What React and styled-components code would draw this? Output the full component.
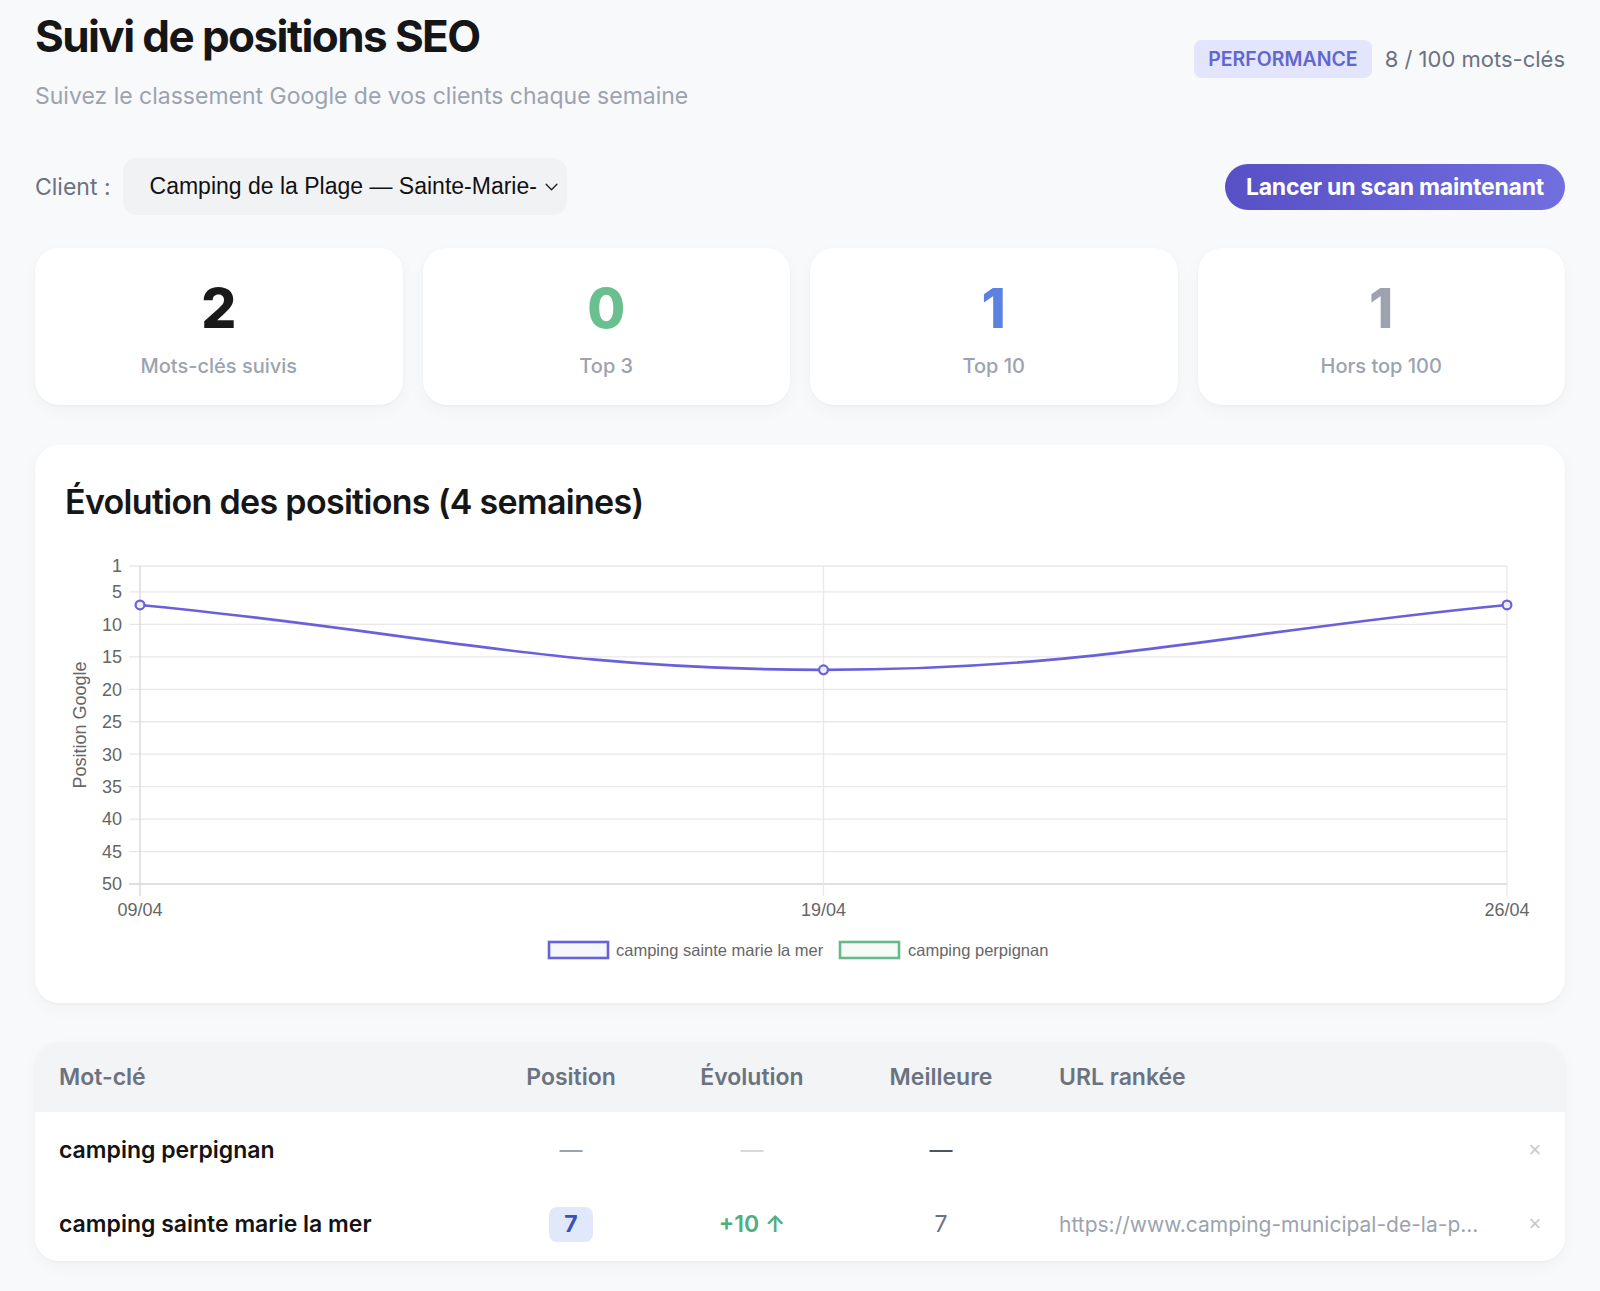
import React from "react";
import styled, { createGlobalStyle } from "styled-components";

const GlobalStyle = createGlobalStyle`
  html, body {
    margin: 0;
    background: #f8f9fb;
  }
  body {
    font-family: Inter, "Noto Sans", sans-serif;
    color: #111827;
  }
  * {
    box-sizing: border-box;
  }
`;

const Page = styled.div`
  padding: 10px 35px 30px;
`;

const Header = styled.header`
  display: flex;
  justify-content: space-between;
  align-items: flex-start;
`;

const Title = styled.h1`
  margin: 0;
  font-size: 44px;
  line-height: 53px;
  font-weight: 700;
  letter-spacing: -0.036em;
  color: #161616;
`;

const Subtitle = styled.p`
  margin: 18px 0 0;
  font-size: 23px;
  line-height: 30px;
  color: #9ca3af;
`;

const Quota = styled.div`
  display: flex;
  align-items: center;
  gap: 13px;
  margin-top: 30px;
`;

const Badge = styled.span`
  display: inline-flex;
  align-items: center;
  height: 38px;
  padding: 0 14px;
  border-radius: 8px;
  background: #e2e5fb;
  color: #6366d1;
  font-size: 19.5px;
  font-weight: 600;
`;

const QuotaText = styled.span`
  font-size: 22px;
  color: #6b7280;
`;

const Toolbar = styled.div`
  display: flex;
  justify-content: space-between;
  align-items: center;
  margin-top: 47px;
`;

const ClientPicker = styled.div`
  display: flex;
  align-items: center;
  gap: 12px;
`;

const ClientLabel = styled.span`
  font-size: 23px;
  color: #6b7280;
`;

const Select = styled.div`
  display: flex;
  align-items: center;
  height: 57px;
  padding: 0 8px 0 27px;
  border-radius: 14px;
  background: #f1f2f4;
  font-family: "Liberation Sans", Arial, sans-serif;
  font-size: 23px;
  color: #111;

  svg {
    width: 15px;
    height: 15px;
    margin-left: 7px;
  }
`;

const ScanButton = styled.button`
  height: 46px;
  padding: 0 21px;
  border: none;
  border-radius: 23px;
  background: linear-gradient(90deg, #5850c6 0%, #716fe0 100%);
  color: #fff;
  font-family: Inter, sans-serif;
  font-size: 23px;
  font-weight: 700;
  letter-spacing: -0.01em;
  cursor: pointer;
`;

const StatsGrid = styled.div`
  display: grid;
  grid-template-columns: repeat(4, 1fr);
  gap: 20px;
  margin-top: 33px;
`;

const Card = styled.div`
  background: #fff;
  border-radius: 24px;
  box-shadow: 0 1px 3px rgba(15, 23, 42, 0.04), 0 6px 18px rgba(15, 23, 42, 0.03);
`;

const StatCard = styled(Card)`
  height: 157px;
  padding-top: 33px;
  text-align: center;
`;

const StatValue = styled.div`
  font-size: 55px;
  line-height: 55px;
  font-weight: 800;
  color: ${(p) => p.$color};
`;

const StatLabel = styled.div`
  margin-top: 18px;
  font-size: 20px;
  line-height: 24px;
  font-weight: 500;
  color: #9ca3af;
`;

const ChartCard = styled(Card)`
  margin-top: 40px;
  padding: 37px 30px 33px;
`;

const ChartTitle = styled.h2`
  margin: 0;
  font-size: 34px;
  line-height: 40px;
  font-weight: 600;
  letter-spacing: -0.02em;
  color: #161616;
`;

const ChartSvg = styled.svg`
  display: block;
  margin-top: 18px;
  font-family: "Liberation Sans", Arial, sans-serif;
`;

const TableCard = styled(Card)`
  margin-top: 39px;
  overflow: hidden;
`;

const Row = styled.div`
  display: grid;
  grid-template-columns: 442px 140px 222px 156px 1fr 40px;
  align-items: center;
  height: ${(p) => p.$h}px;
  padding: 0 10px 0 24px;
  background: ${(p) => (p.$head ? "#f3f4f6" : "#fff")};
  font-size: 23px;
`;

const HeadCell = styled.div`
  font-weight: 600;
  color: #6b7280;
  text-align: ${(p) => (p.$center ? "center" : "left")};
  padding-left: ${(p) => (p.$pad ? "40px" : "0")};
`;

const Keyword = styled.div`
  font-weight: 600;
  color: #141414;
`;

const Cell = styled.div`
  display: flex;
  justify-content: center;
  align-items: center;
  color: ${(p) => p.$color || "#6b7280"};
  font-weight: ${(p) => p.$weight || 400};
`;

const PositionBadge = styled.span`
  display: inline-flex;
  align-items: center;
  justify-content: center;
  width: 44px;
  height: 35px;
  border-radius: 8px;
  background: #e0e9fb;
  color: #3b50c0;
  font-weight: 700;
`;

const UrlCell = styled.div`
  padding-left: 40px;
  font-size: 21px;
  color: #9ca3af;
  white-space: nowrap;
  overflow: hidden;
`;

const RemoveButton = styled.button`
  border: none;
  background: none;
  padding: 0;
  font-family: "Liberation Sans", Arial, sans-serif;
  font-size: 22px;
  color: #c4c8cf;
  cursor: pointer;
`;

const stats = [
  { value: 2, label: "Mots-clés suivis", color: "#1a1a1a" },
  { value: 0, label: "Top 3", color: "#6abf8e" },
  { value: 1, label: "Top 10", color: "#5b82e0" },
  { value: 1, label: "Hors top 100", color: "#9ca3af" },
];

// chart geometry (svg units)
const W = 1470;
const H = 430;
const X0 = 75;
const X1 = 1442;
const Y_TOP = 26;
const STEP = 6.49;
const yOf = (pos) => Y_TOP + (pos - 1) * STEP;
const ticks = [1, 5, 10, 15, 20, 25, 30, 35, 40, 45, 50];
const labels = ["09/04", "19/04", "26/04"];
const xs = [X0, (X0 + X1) / 2, X1];
const series = [7, 17, 7];
const INDIGO = "#6861d9";
const GREEN = "#66b98c";
const AXIS_FONT = 18;

function curvePath(points, t) {
  const ctrl = points.map((p, i) => {
    const prev = points[i - 1] || p;
    const next = points[i + 1] || p;
    const d01 = Math.hypot(p.x - prev.x, p.y - prev.y);
    const d12 = Math.hypot(next.x - p.x, next.y - p.y);
    const sum = d01 + d12 || 1;
    const fa = (t * d01) / sum;
    const fb = (t * d12) / sum;
    return {
      inX: p.x - fa * (next.x - prev.x),
      inY: p.y - fa * (next.y - prev.y),
      outX: p.x + fb * (next.x - prev.x),
      outY: p.y + fb * (next.y - prev.y),
    };
  });
  let d = `M ${points[0].x} ${points[0].y}`;
  for (let i = 1; i < points.length; i++) {
    d += ` C ${ctrl[i - 1].outX} ${ctrl[i - 1].outY} ${ctrl[i].inX} ${ctrl[i].inY} ${points[i].x} ${points[i].y}`;
  }
  return d;
}

function PositionChart() {
  const pts = series.map((v, i) => ({ x: xs[i], y: yOf(v) }));
  const bottom = yOf(50);
  return (
    <ChartSvg width={W} height={H} viewBox={`0 0 ${W} ${H}`}>
      {ticks.map((t) => (
        <g key={t}>
          <line
            x1={64}
            x2={X1}
            y1={yOf(t)}
            y2={yOf(t)}
            stroke={t === 50 ? "#d6d6d6" : "#e8e8e8"}
            strokeWidth={1.3}
          />
          <text x={57} y={yOf(t)} dy="0.35em" textAnchor="end" fontSize={AXIS_FONT} fill="#666">
            {t}
          </text>
        </g>
      ))}
      {xs.map((x, i) => (
        <g key={labels[i]}>
          <line
            x1={x}
            x2={x}
            y1={Y_TOP}
            y2={bottom + 12}
            stroke={i === 0 ? "#d6d6d6" : "#e8e8e8"}
            strokeWidth={1.3}
          />
          <text x={x} y={370} dy="0.35em" textAnchor="middle" fontSize={AXIS_FONT} fill="#666">
            {labels[i]}
          </text>
        </g>
      ))}
      <text
        transform={`translate(15 ${(Y_TOP + bottom) / 2}) rotate(-90)`}
        dy="0.35em"
        textAnchor="middle"
        fontSize={AXIS_FONT}
        fill="#666"
      >
        Position Google
      </text>
      <path d={curvePath(pts, 0.4)} fill="none" stroke={INDIGO} strokeWidth={2.6} />
      {pts.map((p, i) => (
        <circle key={i} cx={p.x} cy={p.y} r={4.4} fill="#eeedfb" stroke={INDIGO} strokeWidth={2.2} />
      ))}
      <rect x={484} y={402} width={59} height={16} fill="rgba(104,97,217,0.06)" stroke={INDIGO} strokeWidth={2.6} />
      <text x={551} y={410} dy="0.35em" fontSize="16.5" fill="#666">
        camping sainte marie la mer
      </text>
      <rect x={775} y={402} width={59} height={16} fill="rgba(102,185,140,0.06)" stroke={GREEN} strokeWidth={2.6} />
      <text x={843} y={410} dy="0.35em" fontSize="16.5" fill="#666">
        camping perpignan
      </text>
    </ChartSvg>
  );
}

function Chevron() {
  return (
    <svg viewBox="0 0 14 14" fill="none" stroke="#222" strokeWidth="1.3" strokeLinecap="round" strokeLinejoin="round">
      <path d="M2 5l5 5 5-5" />
    </svg>
  );
}

export default function App() {
  return (
    <Page>
      <GlobalStyle />
      <Header>
        <div>
          <Title>Suivi de positions SEO</Title>
          <Subtitle>Suivez le classement Google de vos clients chaque semaine</Subtitle>
        </div>
        <Quota>
          <Badge>PERFORMANCE</Badge>
          <QuotaText>8 / 100 mots-clés</QuotaText>
        </Quota>
      </Header>

      <Toolbar>
        <ClientPicker>
          <ClientLabel>Client :</ClientLabel>
          <Select>
            Camping de la Plage — Sainte-Marie-
            <Chevron />
          </Select>
        </ClientPicker>
        <ScanButton>Lancer un scan maintenant</ScanButton>
      </Toolbar>

      <StatsGrid>
        {stats.map((s) => (
          <StatCard key={s.label}>
            <StatValue $color={s.color}>{s.value}</StatValue>
            <StatLabel>{s.label}</StatLabel>
          </StatCard>
        ))}
      </StatsGrid>

      <ChartCard>
        <ChartTitle>Évolution des positions (4 semaines)</ChartTitle>
        <PositionChart />
      </ChartCard>

      <TableCard>
        <Row $head $h={70}>
          <HeadCell>Mot-clé</HeadCell>
          <HeadCell $center>Position</HeadCell>
          <HeadCell $center>Évolution</HeadCell>
          <HeadCell $center>Meilleure</HeadCell>
          <HeadCell $pad>URL rankée</HeadCell>
          <div />
        </Row>
        <Row $h={75}>
          <Keyword>camping perpignan</Keyword>
          <Cell $color="#9ca3af">—</Cell>
          <Cell $color="#d6d9de">—</Cell>
          <Cell $color="#4b5563">—</Cell>
          <UrlCell />
          <Cell>
            <RemoveButton>×</RemoveButton>
          </Cell>
        </Row>
        <Row $h={74}>
          <Keyword>camping sainte marie la mer</Keyword>
          <Cell>
            <PositionBadge>7</PositionBadge>
          </Cell>
          <Cell $color="#4fae7b" $weight={600}>
            +10 ↑
          </Cell>
          <Cell>7</Cell>
          <UrlCell>https://www.camping-municipal-de-la-p...</UrlCell>
          <Cell>
            <RemoveButton>×</RemoveButton>
          </Cell>
        </Row>
      </TableCard>
    </Page>
  );
}
